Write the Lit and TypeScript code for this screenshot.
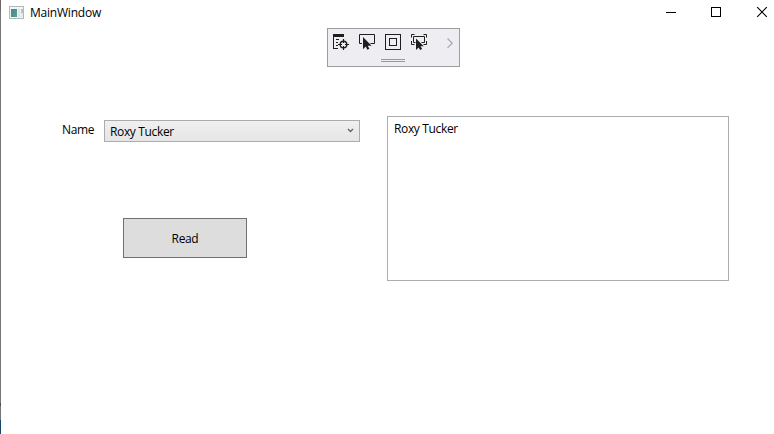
import { LitElement, html, css } from "lit";
import { customElement, property } from "lit/decorators.js";

const WINDOW_TITLE = "MainWindow";
const PERSON = "Roxy Tucker";

@customElement("title-bar")
class TitleBar extends LitElement {
  @property() caption = "";

  static styles = css`
    :host {
      display: flex;
      height: 25px;
      align-items: center;
      padding-left: 8px;
    }
    svg {
      display: block;
      flex: none;
    }
    .caption {
      flex: 1;
      margin-left: 5px;
      line-height: 25px;
      letter-spacing: -0.22px;
    }
    .buttons {
      display: flex;
      margin-right: -10px;
    }
  `;

  render() {
    return html`
      <svg width="16" height="14" viewBox="0 0 16 14" shape-rendering="crispEdges">
        <defs>
          <linearGradient id="pane" x1="0" y1="0" x2="1" y2="1">
            <stop offset="0" stop-color="#4e7f9e" />
            <stop offset="1" stop-color="#4fa583" />
          </linearGradient>
        </defs>
        <rect x=".5" y=".5" width="14" height="12" fill="#f3f4f6" stroke="#b4b8bd" />
        <rect x="2" y="3" width="6" height="8" fill="url(#pane)" />
        <rect x="9" y="3" width="2" height="8" fill="#dfe2e5" />
        <rect x="12" y="3" width="2" height="4" fill="#a9cdb9" />
        <rect x="12" y="7" width="2" height="4" fill="#e3e6e8" />
      </svg>
      <span class="caption">${this.caption}</span>
      <div class="buttons">
        <svg width="45" height="25" viewBox="0 0 45 25">
          <path d="M17 12.5h10" stroke="#000" />
        </svg>
        <svg width="45" height="25" viewBox="0 0 45 25">
          <rect x="17.5" y="7.5" width="9" height="9" fill="none" stroke="#000" />
        </svg>
        <svg width="45" height="25" viewBox="0 0 45 25">
          <path d="M18.2 7.2l9.6 9.6M27.8 7.2l-9.6 9.6" stroke="#000" stroke-width="1.1" />
        </svg>
      </div>
    `;
  }
}

@customElement("debug-toolbar")
class DebugToolbar extends LitElement {
  static styles = css`
    :host {
      display: block;
      box-sizing: border-box;
      width: 133px;
      height: 39px;
      border: 1px solid #9b9ba0;
      background: #eeeef2;
    }
    svg {
      display: block;
    }
  `;

  render() {
    return html`
      <svg width="131" height="37" viewBox="328 29 131 37" fill="none" stroke="#1e1e1e">
        <g>
          <path d="M333 35.5h11" stroke-width="3" />
          <path d="M333.5 35v14M333 48.5h5M336 39.5h3M336 42.5h2M336 45.5h2" />
          <circle cx="343.5" cy="44.5" r="3.3" stroke-width="1.4" />
          <path d="M343.5 39v4M343.5 46v4M338 44.5h4M345 44.5h4" stroke-width="1.2" />
        </g>
        <g>
          <path d="M362 43.5h-2.5v-9h15v9h-4" />
          <path d="M363 37v12.2l2.7-2.7 1.7 3.3 2-1-1.7-3.1h3.9z" fill="#1e1e1e" stroke="none" />
        </g>
        <g>
          <rect x="385.5" y="34.5" width="15" height="15" />
          <rect x="389.5" y="38.5" width="7" height="7" />
        </g>
        <g>
          <path d="M411.5 37.5v-3h3M423.5 34.5h3v3M411.5 41v3.500h3M426.5 41v3.500h-3" />
          <path d="M415.500 42.5h-2v-6h11v6h-3" />
          <path d="M416 38.5v11.5l2.6-2.6 1.6 2.7 1.9-1-1.6-2.8h3.2z" fill="#1e1e1e" stroke="none" />
        </g>
        <path d="M447.5 38.5l4.7 4.7-4.7 4.7" stroke="#aaaab0" stroke-width="1.3" />
        <path d="M381 59.5h24M381 61.5h24" stroke="#999" />
      </svg>
    `;
  }
}

@customElement("app-root")
class AppRoot extends LitElement {
  static styles = css`
    :host {
      display: block;
      box-sizing: border-box;
      height: 434px;
      overflow: hidden;
      background: #fff;
      color: #000;
      font: 12px/16px "Open Sans", "Noto Sans", sans-serif;
      letter-spacing: -0.35px;
      border-left: 1px solid;
      border-image: linear-gradient(#6c6765 0 12px, #777 12px 402px, #505050 402px 405px, #777 405px 419px, #16466b 419px) 1;
    }
    debug-toolbar {
      margin: 3px 0 0 326px;
    }
    .form {
      display: grid;
      grid-template-columns: 359px 342px;
      column-gap: 27px;
      padding-top: 49px;
    }
    .field {
      display: flex;
      margin-top: 4px;
      padding-left: 61px;
    }
    .label {
      width: 42px;
      line-height: 20px;
    }
    .select {
      display: flex;
      flex: 1;
      box-sizing: border-box;
      height: 22px;
      padding: 1px 5px 0;
      justify-content: space-between;
      align-items: center;
      border: 1px solid #acacac;
      background: linear-gradient(#f0f0f0, #e5e5e5);
    }
    .arrow {
      margin-top: -1px;
    }
    .read {
      display: block;
      box-sizing: border-box;
      width: 124px;
      height: 40px;
      margin: 76px 0 0 122px;
      padding: 2px 0 0;
      border: 1px solid #707070;
      border-radius: 0;
      background: #ddd;
      color: #000;
      font: inherit;
      letter-spacing: inherit;
    }
    .output {
      box-sizing: border-box;
      height: 165px;
      padding: 4px 6px;
      border: 1px solid #abadb3;
    }
  `;

  render() {
    return html`
      <title-bar .caption=${WINDOW_TITLE}></title-bar>
      <debug-toolbar></debug-toolbar>
      <div class="form">
        <div>
          <div class="field">
            <span class="label">Name</span>
            <div class="select">
              <span>${PERSON}</span>
              <svg class="arrow" width="7" height="6" viewBox="0 0 7 6">
                <path d="M1 1l2.5 2.5L6 1" fill="none" stroke="#606060" stroke-width="1.3" />
              </svg>
            </div>
          </div>
          <button class="read">Read</button>
        </div>
        <div class="output">${PERSON}</div>
      </div>
    `;
  }
}
